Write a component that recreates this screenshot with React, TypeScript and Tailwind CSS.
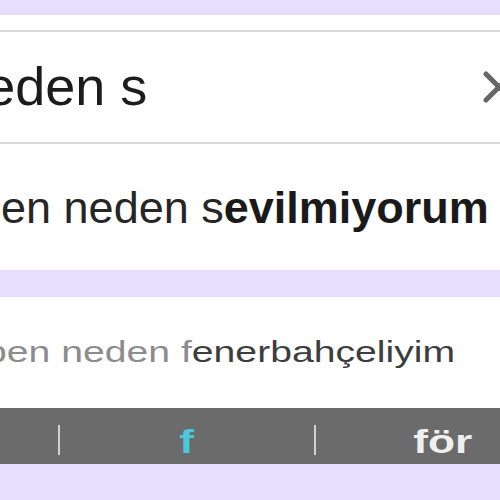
export default function App() {
  return (
    <div className="w-[500px] h-[500px] overflow-hidden bg-[#e7ddfc] font-['Liberation_Sans',Arial,sans-serif]">
      <div className="h-[15px]" />

      {/* search box + first suggestion */}
      <div className="bg-white pt-[15px]">
        <div className="h-[114px] border-y-2 border-[#d8d8d8] flex items-center overflow-hidden">
          <span className="shrink-0 ml-[-150px] whitespace-nowrap text-[54px] leading-none text-[#1c1c1c] -translate-y-[1px]">
            ben neden s
          </span>
          <div className="flex-1" />
          <svg
            width="32"
            height="32"
            viewBox="0 0 32 32"
            className="shrink-0 mr-[-15px]"
            fill="none"
            stroke="#666666"
            strokeWidth="5"
            strokeLinecap="round"
          >
            <path d="M3 3 L29 29 M29 3 L3 29" />
          </svg>
        </div>
        <div className="h-[126px] flex items-center overflow-hidden">
          <span className="shrink-0 ml-[-24px] whitespace-nowrap text-[45px] leading-none text-[#262626]">
            ben neden s<b className="font-bold text-[#1a1a1a]">evilmiyorum</b>
          </span>
        </div>
      </div>

      <div className="h-[27px]" />

      {/* second suggestion */}
      <div className="bg-white h-[111px] flex items-center overflow-hidden">
        <span className="shrink-0 inline-block ml-[-15px] origin-left scale-x-[1.35] whitespace-nowrap text-[29px] leading-none text-[#8c8c8c]">
          ben neden f<span className="text-[#3d3d3d]">enerbahçeliyim</span>
        </span>
      </div>

      {/* predictive bar */}
      <div className="bg-[#6b6b6b] h-[56px] flex items-start pt-[16px] overflow-hidden">
        <div className="w-[58px] shrink-0" />
        <div className="w-[2px] h-[30px] mt-[1px] shrink-0 bg-[#d2d2d2]" />
        <div className="w-[254px] shrink-0 flex justify-center">
          <span className="inline-block scale-x-[1.3] text-[34px] leading-none font-bold text-[#4cc8da]">f</span>
        </div>
        <div className="w-[2px] h-[30px] mt-[1px] shrink-0 bg-[#d2d2d2]" />
        <div className="w-[254px] shrink-0 flex justify-center">
          <span className="inline-block scale-x-[1.3] text-[34px] leading-none font-bold text-[#efefef]">för</span>
        </div>
      </div>
    </div>
  );
}
